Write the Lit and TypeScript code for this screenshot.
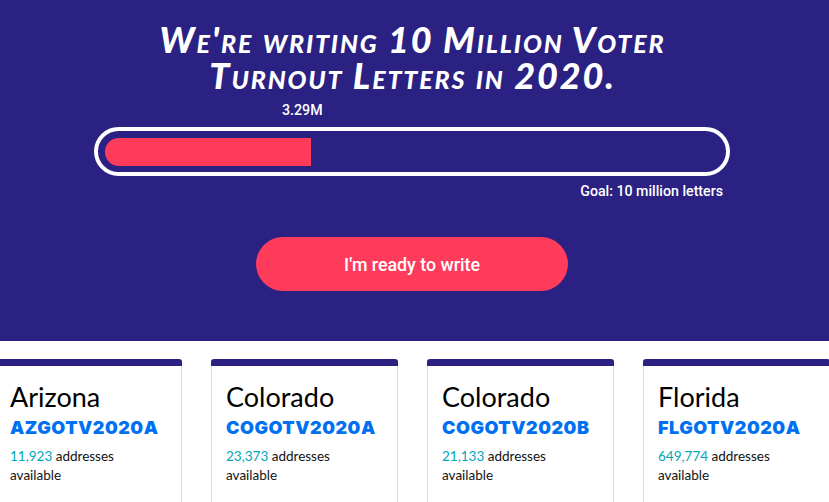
import { LitElement, html, css } from "lit";
import { customElement } from "lit/decorators.js";

const CARDS = [
  { state: "Arizona", code: "AZGOTV2020A", count: "11,923" },
  { state: "Colorado", code: "COGOTV2020A", count: "23,373" },
  { state: "Colorado", code: "COGOTV2020B", count: "21,133" },
  { state: "Florida", code: "FLGOTV2020A", count: "649,774" },
];

@customElement("app-root")
export class AppRoot extends LitElement {
  static styles = css`
    :host { display: block; height: 502px; overflow: hidden; background: #fff; font-family: Roboto, sans-serif; }
    .hero { box-sizing: border-box; height: 341px; background: #2b2182; color: #fff; padding-top: 21px; }
    h1 {
      margin: 0 0 0 -4px; text-align: center;
      font: italic 900 36px/36px Lato, sans-serif; font-variant: small-caps;
      letter-spacing: 1.85px;
    }
    .now { margin: 7px 0 0 282px; font-size: 14.2px; line-height: 20px; font-weight: 500; }
    .track {
      box-sizing: border-box; width: 636px; height: 49px; margin: 7px 0 0 94px;
      border: 4px solid #fff; border-radius: 25px; padding: 7px;
    }
    .fill { width: 206px; height: 28px; background: #ff3b5c; border-radius: 14px 0 0 14px; }
    .goal { width: 723px; margin-top: 6px; text-align: right; font-size: 14.2px; line-height: 18px; font-weight: 500; }
    .cta-row { display: flex; padding-left: 256px; margin-top: 37px; }
    .cta {
      width: 312px; height: 54px; border: 0; border-radius: 27px; background: #ff3b5c; color: #fff;
      font: 500 17.8px Roboto, sans-serif;
    }
    .cards { display: flex; gap: 29px; margin: 18px 0 0 -5.3px; }
    .card {
      flex: none; box-sizing: border-box; width: 187px; height: 160px;
      border: 1px solid #d6dde6; border-top: 0; border-radius: 3px 3px 0 0;
    }
    .bar { height: 7px; margin: 0 -1px; background: #2b2182; border-radius: 3px 3px 0 0; }
    .body { padding: 16px 14.3px 0; }
    .state { font: 400 27px/30px Lato, sans-serif; color: #000; }
    .code { margin-top: 4px; font: 900 18px/24px Inter, sans-serif; letter-spacing: 0.5px; color: #0070f3; white-space: nowrap; }
    .desc { margin-top: 7px; font: 400 13.5px/19px Lato, sans-serif; color: #111; }
    .num { color: #00a8b8; }
  `;

  render() {
    return html`
      <section class="hero">
        <h1>We're writing 10 Million Voter<br />Turnout Letters in 2020.</h1>
        <div class="now">3.29M</div>
        <div class="track"><div class="fill"></div></div>
        <div class="goal">Goal: 10 million letters</div>
        <div class="cta-row"><button class="cta">I'm ready to write</button></div>
      </section>
      <section class="cards">
        ${CARDS.map(
          (c) => html`
            <article class="card">
              <div class="bar"></div>
              <div class="body">
                <div class="state">${c.state}</div>
                <div class="code">${c.code}</div>
                <div class="desc"><span class="num">${c.count}</span> addresses available</div>
              </div>
            </article>
          `
        )}
      </section>
    `;
  }
}
